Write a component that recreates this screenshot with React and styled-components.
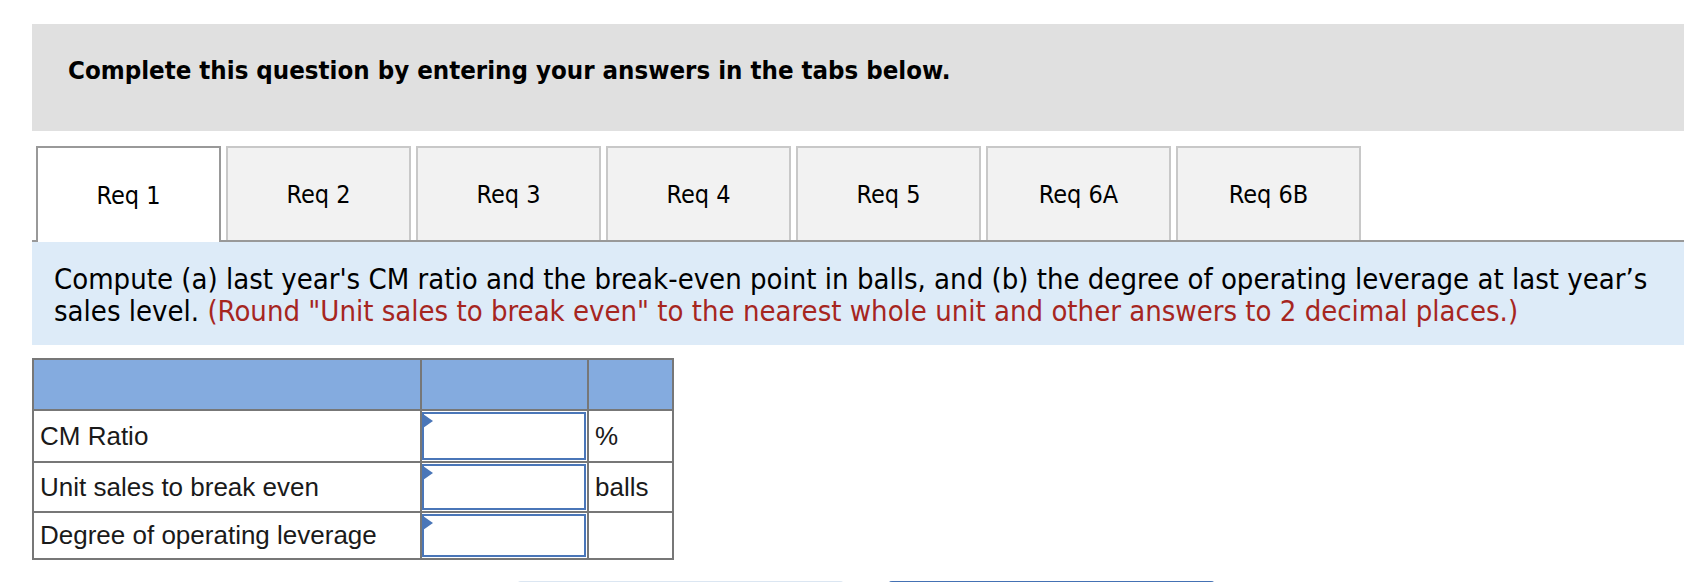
import React from "react";
import styled, { createGlobalStyle } from "styled-components";

const GlobalStyle = createGlobalStyle`
  body {
    margin: 0;
    background: #ffffff;
    overflow: hidden;
  }
`;

const uiFont = `"DejaVu Sans Condensed", "DejaVu Sans", "Liberation Sans", sans-serif`;

const Page = styled.main`
  padding: 24px 0 0 32px;
  font-family: ${uiFont};
  color: #000;
`;

const Banner = styled.div`
  height: 107px;
  box-sizing: border-box;
  background-color: #e0e0e0;
  padding: 31px 0 0 36px;
  font-size: 25.6px;
  font-weight: bold;
  line-height: 30px;
`;

const TabList = styled.div`
  display: flex;
  align-items: flex-end;
  gap: 5px;
  margin-top: 15px;
  padding-left: 4px;
  border-bottom: 2px solid #999999;
  height: 94px;
`;

const Tab = styled.button`
  width: 185px;
  box-sizing: border-box;
  height: ${(props) => (props.$active ? "96px" : "94px")};
  margin-bottom: ${(props) => (props.$active ? "-2px" : "0")};
  border: 2px solid ${(props) => (props.$active ? "#999999" : "#c8c8c8")};
  border-bottom: none;
  background-color: ${(props) => (props.$active ? "#ffffff" : "#f2f2f2")};
  font-family: ${uiFont};
  font-size: 25px;
  color: #000;
  padding: 0;
  cursor: pointer;
`;

const Prompt = styled.div`
  background-color: #ddebf8;
  padding: 21px 20px 18px 22px;
  font-size: 29px;
  line-height: 32px;
`;

const Hint = styled.span`
  color: #a6261f;
`;

const AnswerTable = styled.table`
  margin-top: 13px;
  border-collapse: collapse;
  font-family: "Liberation Sans", Arial, sans-serif;
  font-size: 26px;
  color: #1a1a1a;
`;

const HeadCell = styled.th`
  background-color: #84abdf;
  border: 2px solid #777777;
  height: 49px;
  width: ${(props) => props.$w}px;
  padding: 0;
`;

const Cell = styled.td`
  border: 2px solid #777777;
  height: ${(props) => props.$h}px;
  padding: ${(props) => (props.$input ? "0" : "0 6px")};
  text-align: left;
  vertical-align: middle;
  box-sizing: border-box;
`;

const InputWrap = styled.div`
  position: relative;
  height: ${(props) => props.$h}px;
  margin: 1px 1px 1px 0;
`;

const Field = styled.input`
  box-sizing: border-box;
  width: 100%;
  height: 100%;
  border: 2px solid #4a76b8;
  outline: none;
  font-size: 20px;
  background: #fff;
  margin: 0;
  display: block;
`;

const Flag = styled.span`
  position: absolute;
  left: 1px;
  top: 2px;
  width: 0;
  height: 0;
  border-top: 7px solid transparent;
  border-bottom: 7px solid transparent;
  border-left: 10px solid #4a76b8;
`;

const ButtonRow = styled.div`
  display: flex;
  gap: 42px;
  margin-top: 21px;
  padding-left: 484px;
`;

const NavButton = styled.button`
  width: 329px;
  height: 40px;
  border: none;
  border-radius: 5px;
  background-color: ${(props) => (props.$primary ? "#4471b4" : "#dbe6f2")};
`;

const tabs = ["Req 1", "Req 2", "Req 3", "Req 4", "Req 5", "Req 6A", "Req 6B"];

const rows = [
  { label: "CM Ratio", unit: "%", h: 48 },
  { label: "Unit sales to break even", unit: "balls", h: 46 },
  { label: "Degree of operating leverage", unit: "", h: 43 },
];

const App = () => {
  return (
    <Page>
      <GlobalStyle />
      <Banner>Complete this question by entering your answers in the tabs below.</Banner>
      <TabList>
        {tabs.map((t, i) => (
          <Tab key={t} $active={i === 0}>
            {t}
          </Tab>
        ))}
      </TabList>
      <Prompt>
        Compute (a) last year's CM ratio and the break-even point in balls, and (b) the degree of
        operating leverage at last year’s sales level.{" "}
        <Hint>
          (Round "Unit sales to break even" to the nearest whole unit and other answers to 2
          decimal places.)
        </Hint>
      </Prompt>
      <AnswerTable>
        <thead>
          <tr>
            <HeadCell $w={386} />
            <HeadCell $w={165} />
            <HeadCell $w={83} />
          </tr>
        </thead>
        <tbody>
          {rows.map((r) => (
            <tr key={r.label}>
              <Cell $h={r.h + 4}>{r.label}</Cell>
              <Cell $h={r.h + 4} $input>
                <InputWrap $h={r.h}>
                  <Field type="text" />
                  <Flag />
                </InputWrap>
              </Cell>
              <Cell $h={r.h + 4}>{r.unit}</Cell>
            </tr>
          ))}
        </tbody>
      </AnswerTable>
      <ButtonRow>
        <NavButton />
        <NavButton $primary />
      </ButtonRow>
    </Page>
  );
};

export default App;
